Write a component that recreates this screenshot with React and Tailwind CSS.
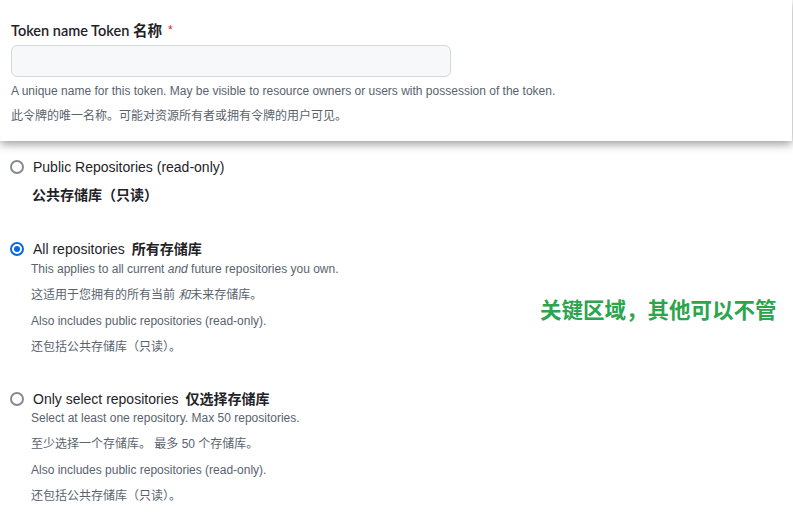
import React from "react";

const font = { fontFamily: '"Segoe UI", "Liberation Sans", "Noto Sans CJK SC", sans-serif' };

function Radio({ checked }) {
  if (checked) {
    return (
      <span className="w-[14px] h-[14px] rounded-full border-[2px] border-[#0969da] bg-white shrink-0 flex items-center justify-center">
        <span className="w-[6px] h-[6px] rounded-full bg-[#0969da]" />
      </span>
    );
  }
  return <span className="w-[14px] h-[14px] rounded-full border-[2px] border-[#858a93] bg-white shrink-0" />;
}

function Desc({ children }) {
  return <div className="text-[12px] leading-[18px] h-[18px] text-[#59636e]">{children}</div>;
}

export default function App() {
  return (
    <div className="relative w-[793px] h-[527px] bg-white overflow-hidden text-[#1f2328]" style={font}>
      <div className="bg-white pt-[20px] pb-[16px] px-[11px] w-[792px] shadow-[0_3px_9px_rgba(0,0,0,0.4)] relative z-10">
        <div className="h-[20px] text-[14px] leading-[20px] flex items-center">
          <span className="font-semibold text-[14.5px]" style={{ fontFamily: 'Lato, "Noto Sans CJK SC", sans-serif' }}>
            Token name Token <span className="font-bold" style={{ fontFamily: '"Noto Sans CJK SC", sans-serif' }}>名称</span>
          </span>
          <span className="text-[#d1242f] ml-[6px] text-[12px]">*</span>
        </div>
        <div className="mt-[5px] w-[440px] h-[32px] rounded-[6px] border border-[#d1d9e0] bg-[#f6f8fa]" />
        <div className="mt-[5px] flex flex-col gap-[7px]">
          <Desc>A unique name for this token. May be visible to resource owners or users with possession of the token.</Desc>
          <Desc>此令牌的唯一名称。可能对资源所有者或拥有令牌的用户可见。</Desc>
        </div>
      </div>

      <div className="px-[10px] pt-[16px]">
        <div className="h-[20px] flex items-center gap-[9px] text-[14px] leading-[20px]">
          <Radio />
          <span>Public Repositories (read-only)</span>
        </div>
        <div className="h-[20px] mt-[8px] pl-[22px] text-[14px] leading-[20px] font-bold">公共存储库（只读）</div>

        <div className="h-[20px] mt-[34px] flex items-center gap-[9px] text-[14px] leading-[20px]">
          <Radio checked />
          <span>All repositories <span className="font-bold ml-[3px]">所有存储库</span></span>
        </div>
        <div className="pl-[21px] mt-[1px] flex flex-col gap-[8px]">
          <Desc>This applies to all current <i>and</i> future repositories you own.</Desc>
          <Desc>这适用于您拥有的所有当前 <i>和</i>未来存储库。</Desc>
          <Desc>Also includes public repositories (read-only).</Desc>
          <Desc>还包括公共存储库（只读）。</Desc>
        </div>

        <div className="h-[20px] mt-[33px] flex items-center gap-[9px] text-[14px] leading-[20px]">
          <Radio />
          <span>Only select repositories <span className="font-bold ml-[3px]">仅选择存储库</span></span>
        </div>
        <div className="pl-[21px] flex flex-col gap-[8px]">
          <Desc>Select at least one repository. Max 50 repositories.</Desc>
          <Desc>至少选择一个存储库。 最多 50 个存储库。</Desc>
          <Desc>Also includes public repositories (read-only).</Desc>
          <Desc>还包括公共存储库（只读）。</Desc>
        </div>
      </div>

      <div className="absolute left-[540px] top-[295px] text-[21.5px] leading-[28px] font-bold text-[#2da44e]" style={{ fontFamily: '"Noto Sans CJK SC", sans-serif' }}>
        关键区域，其他可以不管
      </div>
    </div>
  );
}
